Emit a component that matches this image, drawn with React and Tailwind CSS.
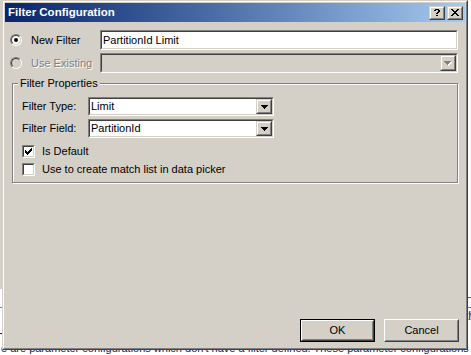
import React from 'react';

const CHECK = ['......X', '.....XX', 'X...XXX', 'XX.XXX.', 'XXXXX..', '.XXX...', '..X....'];
const ARROW = ['XXXXXXX', '.XXXXX.', '..XXX..', '...X...'];
const CLOSE = ['XX....XX', '.XX..XX.', '..XXXX..', '...XX...', '..XXXX..', '.XX..XX.', 'XX....XX'];
const HELP = ['.XXXX.', 'XX..XX', '....XX', '...XX.', '..XX..', '......', '..XX..'];

function Pixels({ rows, color = '#000', shadow }) {
    const w = rows[0].length + (shadow ? 1 : 0);
    const h = rows.length + (shadow ? 1 : 0);
    const cells = [];
    rows.forEach((r, y) => {
        [...r].forEach((c, x) => {
            if (c === 'X') cells.push([x, y]);
        });
    });
    return (
        <svg width={w} height={h} className="block shrink-0" shapeRendering="crispEdges">
            {shadow && cells.map(([x, y]) => <rect key={`s${x}-${y}`} x={x + 1} y={y + 1} width="1" height="1" fill={shadow} />)}
            {cells.map(([x, y]) => <rect key={`${x}-${y}`} x={x} y={y} width="1" height="1" fill={color} />)}
        </svg>
    );
}

function Raised({ className = '', children }) {
    return (
        <div className={`shrink-0 border border-t-[#d4d0c8] border-l-[#d4d0c8] border-r-[#404040] border-b-[#404040] bg-[#d4d0c8] ${className}`}>
            <div className="h-full border border-t-white border-l-white border-r-[#808080] border-b-[#808080] flex items-center justify-center">
                {children}
            </div>
        </div>
    );
}

function Sunken({ className = '', inner = 'bg-white', children }) {
    return (
        <div className={`shrink-0 border border-t-[#808080] border-l-[#808080] border-r-white border-b-white ${className}`}>
            <div className={`h-full border border-t-[#404040] border-l-[#404040] border-r-[#d4d0c8] border-b-[#d4d0c8] flex items-center ${inner}`}>
                {children}
            </div>
        </div>
    );
}

function Radio({ checked, disabled }) {
    return (
        <div className="w-[12px] h-[12px] shrink-0 rounded-full border border-t-[#808080] border-l-[#808080] border-r-white border-b-white">
            <div className={`w-full h-full rounded-full border border-t-[#404040] border-l-[#404040] border-r-[#d4d0c8] border-b-[#d4d0c8] flex items-center justify-center ${disabled ? 'bg-[#d4d0c8]' : 'bg-white'}`}>
                {checked && <div className="w-[4px] h-[4px] rounded-full bg-black" />}
            </div>
        </div>
    );
}

function Checkbox({ checked }) {
    return (
        <Sunken className="w-[13px] h-[13px]" inner="bg-white justify-center">
            {checked && <Pixels rows={CHECK} />}
        </Sunken>
    );
}

function Combo({ value }) {
    return (
        <Sunken className="w-[186px] h-[19px]">
            <span className="flex-1 pl-[1px]">{value}</span>
            <Raised className="w-[16px] h-full">
                <Pixels rows={ARROW} />
            </Raised>
        </Sunken>
    );
}

function PushButton({ label, isDefault }) {
    return (
        <div className={`w-[75px] h-[23px] shrink-0 ${isDefault ? 'border border-black' : ''}`}>
            <div className="w-full h-full border border-t-white border-l-white border-r-[#404040] border-b-[#404040]">
                <div className="h-full border border-t-[#d4d0c8] border-l-[#d4d0c8] border-r-[#808080] border-b-[#808080] flex items-center justify-center">
                    {label}
                </div>
            </div>
        </div>
    );
}

export default function App() {
    return (
        <div className="relative w-[471px] h-[355px] overflow-hidden bg-white font-['Liberation_Sans',Arial,sans-serif] text-[11px] leading-[13px] text-black">
            {/* page behind the dialog */}
            <div className="flex flex-col h-full">
                <div className="h-[292px] flex">
                    <div className="w-[40px] bg-[#d4d0c8]" />
                    <div className="flex-1" />
                </div>
                <div className="h-[18px] flex items-center text-[12px] text-[#1c1c50]">
                    <div className="w-[3px] overflow-hidden flex justify-end"><span>n</span></div>
                    <span className="ml-[465px] text-[#3060c0]">H</span>
                </div>
                <div className="h-px bg-[#7a7a7a]" />
                <div className="h-[16px] flex items-center text-[12px] text-[#1c1c50]">
                    <div className="w-[3px] overflow-hidden flex justify-end"><span>s</span></div>
                    <span className="ml-[465px]">th</span>
                </div>
                <div className="h-[18px] flex items-center text-[12px] text-[#1c1c50]">
                    <div className="w-[3px] overflow-hidden flex justify-end"><span>-</span></div>
                </div>
                <div className="pl-[1px] whitespace-nowrap text-[#1c1c50]">
                    e are parameter configurations which don't have a filter defined. These parameter configurations '
                </div>
            </div>

            {/* dialog window */}
            <div className="absolute left-[2px] top-0 w-[466px] h-[350px] bg-[#d4d0c8] border border-t-[#d4d0c8] border-l-[#d4d0c8] border-r-[#404040] border-b-[#404040]">
                <div className="h-full border border-t-white border-l-white border-r-[#808080] border-b-[#808080] p-px flex flex-col">
                    <div className="h-[19px] shrink-0 flex items-center bg-linear-to-r from-[#0a246a] to-[#a6caf0] pl-[3px] pr-[2px]">
                        <span className="flex-1 font-bold text-[11.5px] text-white">Filter Configuration</span>
                        <Raised className="w-[16px] h-[14px]"><Pixels rows={HELP} /></Raised>
                        <Raised className="w-[16px] h-[14px] ml-[2px]"><Pixels rows={CLOSE} /></Raised>
                    </div>

                    <div className="flex-1 flex flex-col">
                        <div className="mt-[8px] pl-[5px] grid grid-cols-[90px_358px] grid-rows-[20px_20px] gap-y-[3px] items-center">
                            <div className="flex items-center gap-[9px]">
                                <Radio checked />
                                <span>New Filter</span>
                            </div>
                            <Sunken className="h-[20px]">
                                <span className="pl-[1px]">PartitionId Limit</span>
                            </Sunken>
                            <div className="flex items-center gap-[9px] text-[#808080] [text-shadow:1px_1px_0_#fff]">
                                <Radio disabled />
                                <span>Use Existing</span>
                            </div>
                            <Sunken className="h-[20px]" inner="bg-[#d4d0c8] justify-end">
                                <Raised className="w-[16px] h-full">
                                    <Pixels rows={ARROW} color="#808080" shadow="#ffffff" />
                                </Raised>
                            </Sunken>
                        </div>

                        <div className="relative mt-[10px] ml-[7px] w-[446px] h-[100px] shrink-0 border border-[#808080] shadow-[inset_1px_1px_0_#fff,1px_1px_0_#fff]">
                            <span className="absolute -top-[7px] left-[5px] px-[2px] bg-[#d4d0c8]">Filter Properties</span>
                            <div className="flex flex-col pt-[13px] pl-[9px]">
                                <div className="flex items-center">
                                    <div className="w-[66px] shrink-0">Filter Type:</div>
                                    <Combo value="Limit" />
                                </div>
                                <div className="mt-[3px] flex items-center">
                                    <div className="w-[66px] shrink-0">Filter Field:</div>
                                    <Combo value="PartitionId" />
                                </div>
                                <div className="mt-[7px] flex items-center">
                                    <Checkbox checked />
                                    <span className="ml-[7px]">Is Default</span>
                                </div>
                                <div className="mt-[5px] flex items-center">
                                    <Checkbox />
                                    <span className="ml-[7px]">Use to create match list in data picker</span>
                                </div>
                            </div>
                        </div>

                        <div className="mt-auto mb-[5px] pr-[6px] flex justify-end gap-[9px]">
                            <PushButton label="OK" isDefault />
                            <PushButton label="Cancel" />
                        </div>
                    </div>
                </div>
            </div>
        </div>
    );
}
